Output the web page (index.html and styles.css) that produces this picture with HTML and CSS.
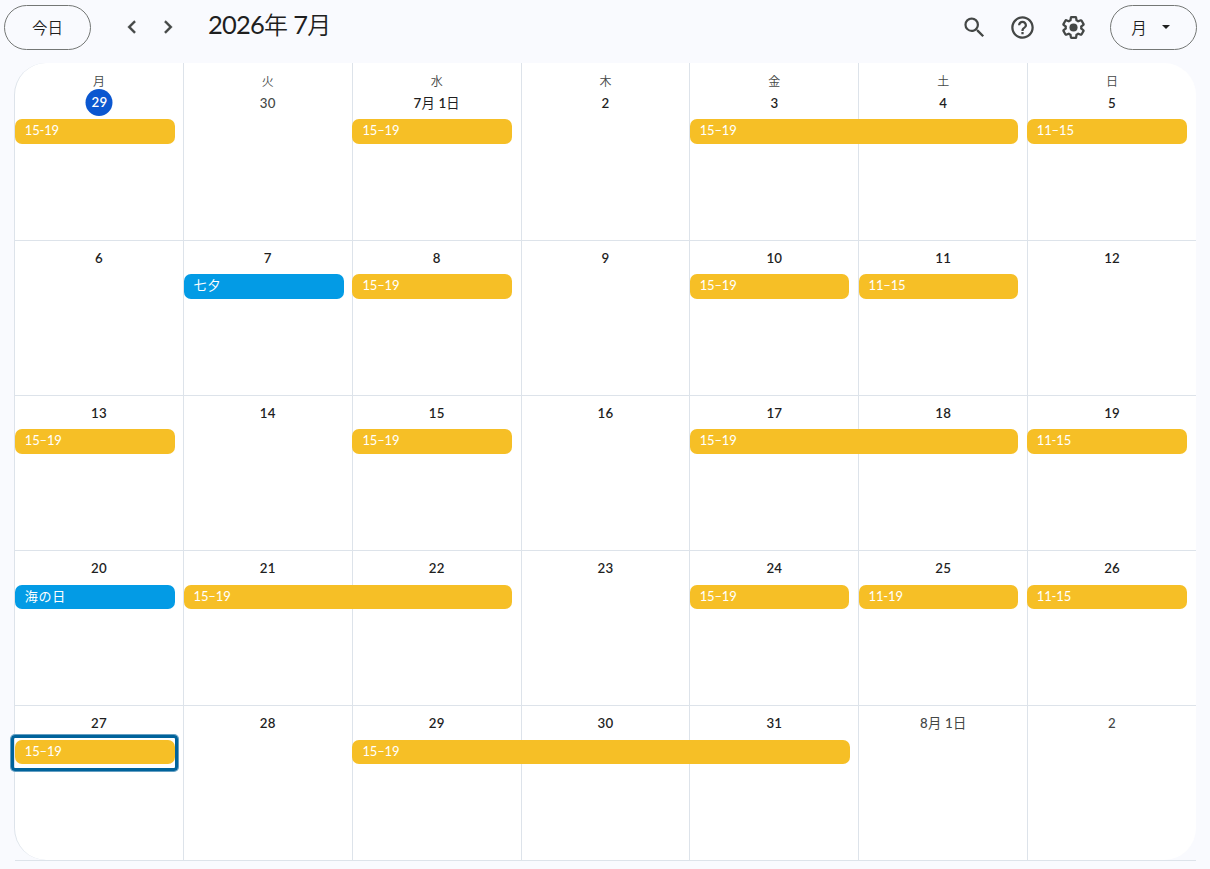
FILE: index.html
```html
<!DOCTYPE html>
<html lang="ja">
<head>
<meta charset="utf-8">
<title>カレンダー</title>
<link rel="stylesheet" href="styles.css">
</head>
<body>
<header class="toolbar">
  <button class="pill today-btn">今日</button>
  <nav class="pager">
    <svg class="chevron" viewBox="0 0 24 24"><path d="M15.41 7.41L14 6l-6 6 6 6 1.41-1.41L10.83 12z"/></svg>
    <svg class="chevron" viewBox="0 0 24 24"><path d="M10 6L8.59 7.41 13.17 12l-4.58 4.59L10 18l6-6z"/></svg>
  </nav>
  <h1 class="title"><span class="latin">2026</span>年 <span class="latin">7</span>月</h1>
  <div class="tools">
    <svg class="icon search" viewBox="0 0 24 24"><path d="M15.5 14h-.79l-.28-.27A6.47 6.47 0 0 0 16 9.5 6.5 6.5 0 1 0 9.5 16c1.61 0 3.09-.59 4.23-1.57l.27.28v.79l5 4.99L20.49 19l-4.99-5zm-6 0C7.01 14 5 11.99 5 9.5S7.01 5 9.5 5 14 7.01 14 9.5 11.99 14 9.5 14z"/></svg>
    <svg class="icon" viewBox="0 0 24 24"><path d="M11 18h2v-2h-2v2zm1-16C6.48 2 2 6.48 2 12s4.48 10 10 10 10-4.48 10-10S17.52 2 12 2zm0 18c-4.41 0-8-3.59-8-8s3.59-8 8-8 8 3.59 8 8-3.59 8-8 8zm0-14c-2.21 0-4 1.79-4 4h2c0-1.1.9-2 2-2s2 .9 2 2c0 2-3 1.75-3 5h2c0-2.25 3-2.5 3-5 0-2.21-1.79-4-4-4z"/></svg>
    <svg class="icon gear" viewBox="0 0 24 24"><path d="M13.85 22.25h-3.7c-.74 0-1.36-.54-1.45-1.27l-.27-1.89c-.27-.14-.53-.29-.79-.46l-1.8.72c-.7.26-1.47-.03-1.81-.65L2.2 15.53c-.35-.66-.2-1.44.36-1.88l1.53-1.19c-.01-.15-.02-.3-.02-.46 0-.15.01-.31.02-.46l-1.52-1.19c-.59-.45-.74-1.26-.37-1.88l1.85-3.19c.34-.62 1.11-.9 1.79-.63l1.81.73c.26-.17.52-.32.78-.46l.27-1.91c.09-.7.71-1.25 1.44-1.25h3.7c.74 0 1.36.54 1.45 1.27l.27 1.89c.27.14.53.29.79.46l1.8-.72c.71-.26 1.48.03 1.82.65l1.84 3.18c.36.66.2 1.44-.36 1.88l-1.52 1.19c.01.15.02.3.02.46s-.01.31-.02.46l1.52 1.19c.56.45.72 1.23.37 1.86l-1.86 3.22c-.34.62-1.11.9-1.8.63l-1.8-.72c-.26.17-.52.32-.78.46l-.27 1.91c-.1.68-.72 1.22-1.46 1.22zm-3.23-2h2.76l.37-2.55.53-.22c.44-.18.88-.44 1.34-.78l.45-.34 2.38.96 1.38-2.4-2.03-1.58.07-.56c.03-.26.06-.51.06-.78s-.03-.53-.06-.78l-.07-.56 2.03-1.58-1.39-2.4-2.39.96-.45-.35c-.42-.32-.87-.58-1.33-.77l-.52-.22-.37-2.55h-2.76l-.37 2.55-.53.21c-.44.19-.88.44-1.34.79l-.45.33-2.38-.95-1.39 2.39 2.03 1.58-.07.56a7 7 0 0 0-.06.79c0 .26.02.53.06.78l.07.56-2.03 1.58 1.38 2.4 2.39-.96.45.35c.43.33.86.58 1.33.77l.53.22.38 2.55z"/><circle cx="12" cy="12" r="3.6"/></svg>
    <button class="pill view-btn">月<svg class="caret" viewBox="0 0 10 5"><path d="M0 0h10L5 5z"/></svg></button>
  </div>
</header>
<main class="calendar"></main>
<script src="calendar.js"></script>
</body>
</html>
```
FILE: styles.css
```css
* { box-sizing: border-box; }
body {
  margin: 0;
  height: 869px;
  overflow: hidden;
  background: #f9fafe;
  color: #1f1f1f;
  font-family: Lato, "Noto Sans CJK JP", sans-serif;
}
.toolbar {
  display: flex;
  align-items: center;
  height: 63px;
  padding: 0 13px 9px 4px;
}
.pill {
  display: flex;
  align-items: center;
  justify-content: center;
  height: 45px;
  padding: 0;
  border: 1px solid #747775;
  border-radius: 23px;
  background: transparent;
  color: #1f1f1f;
  font: 350 15.5px "Noto Sans CJK JP", sans-serif;
}
.today-btn { width: 87px; }
.pager { display: flex; gap: 10px; margin-left: 28px; }
.chevron { width: 26px; height: 26px; fill: #444746; stroke: #444746; stroke-width: .3; }
.title {
  margin: 0 0 6px 27px;
  font: 350 24px/32px "Noto Sans CJK JP", sans-serif;
  white-space: nowrap;
}
.latin { font-family: Lato, sans-serif; font-weight: 400; font-size: 25.5px; letter-spacing: -.8px; }
.tools { display: flex; align-items: center; margin-left: auto; }
.icon { width: 27px; height: 27px; margin-right: 24px; fill: #444746; }
.icon.search { margin-right: 21px; }
.icon.gear { margin-right: 23px; }
.view-btn { width: 87px; gap: 15px; padding-right: 6px; }
.caret { width: 8px; height: 4px; fill: #1f1f1f; }

.calendar {
  width: 1182px;
  height: 798px;
  margin-left: 14px;
  display: grid;
  grid-template-rows: 177px repeat(4, 155px);
  background: linear-gradient(#dde3ea, #dde3ea) 1px 100% / 100% 1px no-repeat;
}
.week {
  display: grid;
  grid-template-columns: repeat(7, 1fr);
  grid-template-rows: 34px 25px 1fr;
}
.week.first { grid-template-rows: 56px 25px 1fr; }
.week.late { grid-template-rows: 35px 24px 1fr; }
.day {
  grid-row: 1 / -1;
  border-left: 1px solid #dde3ea;
  border-top: 1px solid #dde3ea;
  background: #fff;
  padding-top: 7px;
  text-align: center;
}
.first .day { border-top: 0; padding-top: 10px; }
.first .day:first-of-type { border-top-left-radius: 32px; }
.first .day.last { border-top-right-radius: 32px; }
.bottom .day:first-of-type { border-bottom-left-radius: 32px; }
.bottom .day.last { border-bottom-right-radius: 32px; }
.weekday { font-size: 12px; font-weight: 350; line-height: 17px; color: #444746; }
.date {
  display: block;
  font-family: "Lato Semibold", Lato, "Noto Sans CJK JP", sans-serif;
  font-size: 13.3px;
  font-weight: 600;
  line-height: 20px;
  letter-spacing: .2px;
}
.first .date { line-height: 26px; }
.kanji { font-weight: 400; }
.date.outside { font-family: "Lato Medium", Lato, "Noto Sans CJK JP", sans-serif; color: #444746; font-weight: 500; }
.date.today {
  width: 27px;
  height: 27px;
  margin: -1px auto 0;
  transform: translateX(.5px);
  border-radius: 50%;
  background: #0b57d0;
  color: #fff;
  line-height: 27px;
}
.event {
  position: relative;
  grid-row: 2;
  margin-right: 8.2px;
  margin-left: .75px;
  padding-left: 10px;
  border-radius: 7px;
  background: #f6bf26;
  color: #fff;
  font-size: 13px;
  line-height: 23px;
  letter-spacing: -.15px;
}
.event.col-5, .event.col-6 { margin-right: 8.9px; padding-left: 9.5px; }
.event.col-7 { margin-left: .2px; margin-right: 8.9px; padding-left: 9.5px; }
.event.holiday { background: #039be5; letter-spacing: .8px; }
/* Focus ring drawn around the selected event */
.event.focused::after {
  content: "";
  position: absolute;
  inset: -5px -3px -7px -4px;
  border: 3px solid #00639b;
  border-radius: 4px;
  box-shadow: 0 0 0 1px #659fc2;
}
```
FILE: calendar.js
```js
const weekdays = ["月", "火", "水", "木", "金", "土", "日"];
// Events: [first column, columns spanned, label, modifier]
const weeks = [
  { days: ["29", "30", "7月 1日", "2", "3", "4", "5"], outside: [1],
    events: [[1, 1, "15-19"], [3, 1, "15–19"], [5, 2, "15–19"], [7, 1, "11–15"]] },
  { days: ["6", "7", "8", "9", "10", "11", "12"],
    events: [[2, 1, "七夕", "holiday"], [3, 1, "15–19"], [5, 1, "15–19"], [6, 1, "11–15"]] },
  { days: ["13", "14", "15", "16", "17", "18", "19"],
    events: [[1, 1, "15–19"], [3, 1, "15–19"], [5, 2, "15–19"], [7, 1, "11-15"]] },
  { days: ["20", "21", "22", "23", "24", "25", "26"],
    events: [[1, 1, "海の日", "holiday"], [2, 2, "15–19"], [5, 1, "15–19"], [6, 1, "11-19"], [7, 1, "11-15"]] },
  { days: ["27", "28", "29", "30", "31", "8月 1日", "2"], outside: [5, 6],
    events: [[1, 1, "15–19", "focused"], [3, 3, "15–19"]] }
];

document.querySelector(".calendar").innerHTML = weeks.map((week, w) => {
  const days = week.days.map((label, i) => {
    const state = w === 0 && i === 0 ? " today" : (week.outside || []).includes(i) ? " outside" : "";
    const text = label.replace(/[月日]/g, '<span class="kanji">$&</span>');
    const head = w === 0 ? `<div class="weekday">${weekdays[i]}</div>` : "";
    return `<div class="day${i === 6 ? " last" : ""}" style="grid-column:${i + 1}">${head}<span class="date${state}">${text}</span></div>`;
  }).join("");
  const events = week.events.map(([col, span, label, kind]) =>
    `<div class="event col-${col} ${kind || ""}" style="grid-column:${col} / span ${span}">${label}</div>`).join("");
  return `<section class="week${w === 0 ? " first" : ""}${w > 2 ? " late" : ""}${w === 4 ? " bottom" : ""}">${days}${events}</section>`;
}).join("");
```
